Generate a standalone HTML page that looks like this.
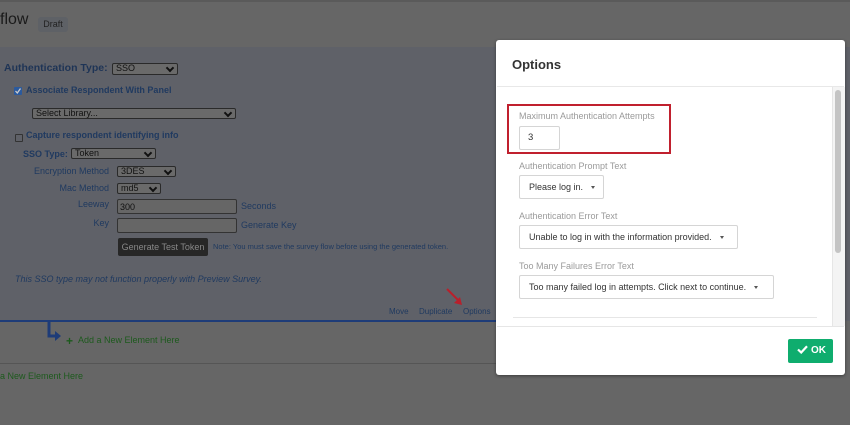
<!DOCTYPE html>
<html><head><meta charset="utf-8"><style>
*{margin:0;padding:0;box-sizing:border-box}
body{width:850px;height:425px;overflow:hidden;position:relative;background:#666;font-family:"Liberation Sans",sans-serif}
.a{position:absolute;white-space:nowrap}
.sel{position:absolute;background:#6a6a6a;border:1px solid #2a2a2a;border-radius:2px;font-size:9px;color:#111;padding-left:3px;line-height:9px;white-space:nowrap;overflow:hidden}
.sel:after{content:"";position:absolute;right:4px;top:1px;width:4px;height:4px;border-right:2px solid #111;border-bottom:2px solid #111;transform:rotate(45deg)}
.inp{position:absolute;background:#666;border:1px solid #333;border-radius:2px;font-size:9px;color:#111;padding:3px 2px}
.lb{color:#203a60;font-size:9px}
.ml{position:absolute;left:519px;font-size:9px;color:#9a9a9a}
.dd{position:absolute;left:519px;height:24px;border:1px solid #d5d5d5;border-radius:2px;font-size:9px;color:#333;line-height:22px;padding-left:9px;background:#fff;white-space:nowrap}
.car{display:inline-block;width:0;height:0;border-left:2.5px solid transparent;border-right:2.5px solid transparent;border-top:3px solid #555;margin-left:8px;vertical-align:middle}
</style></head><body>
<div class="a" style="left:0;top:0;width:850px;height:2px;background:#5a5a5a"></div>
<div class="a" style="left:0;top:47px;width:850px;height:274px;background:#5f6168"></div>
<div class="a" style="left:0;top:11px;font-size:16px;color:#1a1a1a">flow</div>
<div class="a" style="left:38px;top:17px;width:30px;height:15px;background:#5e6166;border-radius:3px;font-size:9px;color:#222;text-align:center;line-height:15px">Draft</div>

<div class="a" style="left:4px;top:62px;font-size:10.5px;font-weight:bold;color:#1e3456">Authentication Type:</div>
<div class="sel" style="left:112px;top:63px;width:66px;height:12px">SSO</div>
<div class="a" style="left:14px;top:87px;width:8px;height:8px;background:#2b5a9e;border-radius:1px"><svg width="8" height="8" style="position:absolute;top:0;left:0"><path d="M1.5 4L3.3 6 6.5 1.5" stroke="#ccc" stroke-width="1.3" fill="none"/></svg></div>
<div class="a lb" style="left:26px;top:85px;font-weight:bold">Associate Respondent With Panel</div>
<div class="sel" style="left:32px;top:108px;width:204px;height:11px">Select Library...</div>
<div class="a" style="left:15px;top:134px;width:8px;height:8px;border:1px solid #333;border-radius:1px"></div>
<div class="a lb" style="left:26px;top:130px;font-weight:bold">Capture respondent identifying info</div>
<div class="a lb" style="left:23px;top:149px;font-weight:bold">SSO Type:</div>
<div class="sel" style="left:71px;top:148px;width:85px;height:11px">Token</div>
<div class="a lb" style="left:0;width:109px;text-align:right;top:166px">Encryption Method</div>
<div class="sel" style="left:117px;top:166px;width:59px;height:11px">3DES</div>
<div class="a lb" style="left:0;width:109px;text-align:right;top:183px">Mac Method</div>
<div class="sel" style="left:117px;top:183px;width:44px;height:11px">md5</div>
<div class="a lb" style="left:0;width:109px;text-align:right;top:199px">Leeway</div>
<div class="inp" style="left:117px;top:199px;width:120px;height:15px;line-height:8px">300</div>
<div class="a lb" style="left:241px;top:201px">Seconds</div>
<div class="a lb" style="left:0;width:109px;text-align:right;top:218px">Key</div>
<div class="inp" style="left:117px;top:218px;width:120px;height:15px"></div>
<div class="a lb" style="left:241px;top:220px">Generate Key</div>
<div class="a" style="left:118px;top:238px;width:90px;height:18px;background:#272727;border-radius:2px;color:#888;font-size:9px;text-align:center;line-height:18px">Generate Test Token</div>
<div class="a lb" style="left:213px;top:242px;font-size:7.5px">Note: You must save the survey flow before using the generated token.</div>
<div class="a lb" style="left:15px;top:274px;font-style:italic">This SSO type may not function properly with Preview Survey.</div>
<div class="a lb" style="left:389px;top:307px;font-size:8px">Move</div>
<div class="a lb" style="left:419px;top:307px;font-size:8px">Duplicate</div>
<div class="a lb" style="left:463px;top:307px;font-size:8px">Options</div>
<svg class="a" style="left:440px;top:285px" width="30" height="25"><path d="M7 4L20 17" stroke="#b8202c" stroke-width="2"/><path d="M14 18L22 20 20 12Z" fill="#b8202c"/></svg>
<div class="a" style="left:0;top:320px;width:496px;height:2px;background:#1e3c78"></div>
<svg class="a" style="left:43px;top:321px" width="20" height="24"><path d="M6 0V15H13" stroke="#1e3c78" stroke-width="3" fill="none"/><path d="M12 10L18 15 12 20Z" fill="#1e3c78"/></svg>
<div class="a" style="left:66px;top:334px;font-size:12px;font-weight:bold;color:#1d5a1d">+</div>
<div class="a" style="left:78px;top:335px;font-size:9px;color:#1d5a1d">Add a New Element Here</div>
<div class="a" style="left:0;top:363px;width:496px;height:1px;background:#555"></div>
<div class="a" style="left:0;top:371px;font-size:9px;color:#1d5a1d">a New Element Here</div>

<div class="a" style="left:496px;top:40px;width:349px;height:335px;background:#fff;border-radius:3px;box-shadow:0 1px 3px rgba(0,0,0,.4)"></div>
<div class="a" style="left:512px;top:57px;font-size:13px;font-weight:bold;color:#333">Options</div>
<div class="a" style="left:497px;top:86px;width:347px;height:1px;background:#e8e8e8"></div>
<div class="a" style="left:832px;top:87px;width:13px;height:239px;background:#f4f4f4;border-left:1px solid #e6e6e6"></div>
<div class="a" style="left:835px;top:90px;width:6px;height:163px;background:#c4c4c4;border-radius:3px"></div>
<div class="a" style="left:507px;top:104px;width:164px;height:50px;border:2px solid #c0202e"></div>
<div class="ml" style="top:111px">Maximum Authentication Attempts</div>
<div class="a" style="left:519px;top:126px;width:41px;height:24px;border:1px solid #d5d5d5;border-radius:2px;font-size:9.5px;color:#333;line-height:22px;padding-left:8px">3</div>
<div class="ml" style="top:161px">Authentication Prompt Text</div>
<div class="dd" style="top:175px;width:85px">Please log in.<span class="car"></span></div>
<div class="ml" style="top:211px">Authentication Error Text</div>
<div class="dd" style="top:225px;width:219px">Unable to log in with the information provided.<span class="car"></span></div>
<div class="ml" style="top:261px">Too Many Failures Error Text</div>
<div class="dd" style="top:275px;width:255px">Too many failed log in attempts. Click next to continue.<span class="car"></span></div>
<div class="a" style="left:513px;top:317px;width:304px;height:1px;background:#e6e6e6"></div>
<div class="a" style="left:497px;top:326px;width:347px;height:1px;background:#e6e6e6"></div>
<div class="a" style="left:788px;top:339px;width:45px;height:24px;background:#0fad6e;border-radius:2px;color:#fff;font-size:10px;font-weight:bold;line-height:24px;padding-left:9px"><svg width="11" height="9" style="vertical-align:-1px;margin-right:3px"><path d="M1 4.5L4.2 7.5 10 1.2" stroke="#fff" stroke-width="2.2" fill="none"/></svg>OK</div>
</body></html>
